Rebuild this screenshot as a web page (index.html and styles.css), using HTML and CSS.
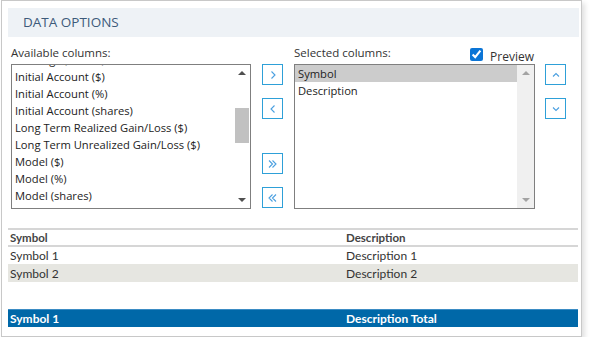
FILE: index.html
```html
<!DOCTYPE html>
<html lang="en">
<head>
    <meta charset="UTF-8">
    <title>Data Options</title>
    <link rel="stylesheet" href="styles.css">
</head>
<body>
    <div class="panel">
        <div class="panel-head">DATA OPTIONS</div>

        <div class="options">
            <div class="column available">
                <div class="column-label">Available columns:</div>
                <div class="listbox">
                    <ul class="items scrolled">
                        <li>Holdings (shares)</li>
                        <li>Initial Account ($)</li>
                        <li>Initial Account (%)</li>
                        <li>Initial Account (shares)</li>
                        <li>Long Term Realized Gain/Loss ($)</li>
                        <li>Long Term Unrealized Gain/Loss ($)</li>
                        <li>Model ($)</li>
                        <li>Model (%)</li>
                        <li>Model (shares)</li>
                    </ul>
                    <div class="scrollbar">
                        <span class="arrow up"></span>
                        <span class="track"><span class="thumb"></span></span>
                        <span class="arrow down"></span>
                    </div>
                </div>
            </div>

            <div class="move-buttons">
                <button class="icon-btn" title="Add">
                    <svg width="8" height="8" viewBox="0 0 8 8"><path d="M2.5 0.5 L6 4 L2.5 7.5"/></svg>
                </button>
                <button class="icon-btn" title="Remove">
                    <svg width="8" height="8" viewBox="0 0 8 8"><path d="M5.5 0.5 L2 4 L5.5 7.5"/></svg>
                </button>
                <button class="icon-btn gap" title="Add all">
                    <svg width="9" height="8" viewBox="0 0 9 8"><path d="M1 0.5 L4.5 4 L1 7.5 M4.5 0.5 L8 4 L4.5 7.5"/></svg>
                </button>
                <button class="icon-btn" title="Remove all">
                    <svg width="9" height="8" viewBox="0 0 9 8"><path d="M8 0.5 L4.5 4 L8 7.5 M4.5 0.5 L1 4 L4.5 7.5"/></svg>
                </button>
            </div>

            <div class="column selected">
                <div class="column-label">
                    <span>Selected columns:</span>
                    <label class="preview"><input type="checkbox" checked> Preview</label>
                </div>
                <div class="listbox">
                    <ul class="items">
                        <li class="active">Symbol</li>
                        <li>Description</li>
                    </ul>
                    <div class="scrollbar disabled">
                        <span class="arrow up"></span>
                        <span class="track"></span>
                        <span class="arrow down"></span>
                    </div>
                </div>
            </div>

            <div class="order-buttons">
                <button class="icon-btn" title="Move up">
                    <svg width="8" height="8" viewBox="0 0 8 8"><path d="M1 5.5 L4 2.5 L7 5.5"/></svg>
                </button>
                <button class="icon-btn" title="Move down">
                    <svg width="8" height="8" viewBox="0 0 8 8"><path d="M1 2.5 L4 5.5 L7 2.5"/></svg>
                </button>
            </div>
        </div>

        <table class="preview-table">
            <thead>
                <tr>
                    <th class="col-symbol">Symbol</th>
                    <th>Description</th>
                </tr>
            </thead>
            <tbody>
                <tr>
                    <td>Symbol 1</td>
                    <td>Description 1</td>
                </tr>
                <tr class="alt">
                    <td>Symbol 2</td>
                    <td>Description 2</td>
                </tr>
                <tr class="spacer"><td colspan="2"></td></tr>
            </tbody>
            <tfoot>
                <tr>
                    <td>Symbol 1</td>
                    <td>Description Total</td>
                </tr>
            </tfoot>
        </table>
    </div>
</body>
</html>
```

FILE: styles.css
```css
* {
    margin: 0;
    padding: 0;
    box-sizing: border-box;
}

body {
    background: #ffffff;
    font-family: "Open Sans", "Noto Sans", sans-serif;
    color: #222222;
}

.panel {
    width: 581px;
    height: 337px;
    margin-left: 1px;
    padding: 7px 2px 0 6px;
    border: 1px solid #c8c8c8;
    background: #ffffff;
    box-shadow: 3px 3px 5px rgba(0, 0, 0, 0.12);
}

.panel-head {
    height: 29px;
    padding-left: 15px;
    background: #eef2f6;
    color: #3d5a7a;
    font-size: 13.5px;
    line-height: 29px;
}

/* column pickers */
.options {
    display: flex;
    align-items: flex-start;
    padding: 8px 0 0 3px;
}

.column-label {
    display: flex;
    justify-content: space-between;
    height: 16px;
    margin-bottom: 3px;
    font-size: 11.5px;
    line-height: 16px;
    color: #333333;
}

.available {
    width: 240px;
}

.selected {
    width: 241px;
    margin-left: 11px;
}

.preview {
    display: flex;
    align-items: flex-start;
    gap: 7px;
    margin-top: 3px;
    padding-right: 1px;
    font-size: 12px;
    line-height: 17px;
}

.preview input {
    width: 13px;
    height: 13px;
    margin: 0;
    accent-color: #0b75d6;
}

.listbox {
    display: flex;
    height: 145px;
    border: 1px solid #7f7f7f;
    overflow: hidden;
}

.items {
    flex: 1;
    list-style: none;
    font-size: 11.2px;
    line-height: 17px;
}

.items li {
    height: 17px;
    padding-left: 3px;
    white-space: nowrap;
}

.items.scrolled {
    margin-top: -14px;
}

.items li.active {
    background: #cccccc;
}

.scrollbar {
    display: flex;
    flex-direction: column;
    width: 16px;
    background: #ffffff;
}

.scrollbar.disabled {
    width: 17px;
    background: #f0f0f0;
}

.arrow {
    display: flex;
    justify-content: center;
    align-items: center;
    height: 16px;
}

.arrow::before {
    content: "";
    border-left: 4px solid transparent;
    border-right: 4px solid transparent;
}

.arrow.up::before {
    border-bottom: 4px solid #505050;
}

.arrow.down::before {
    border-top: 4px solid #505050;
}

.disabled .arrow.up::before {
    border-bottom-color: #a3a3a3;
}

.disabled .arrow.down::before {
    border-top-color: #a3a3a3;
}

.track {
    flex: 1;
    padding: 27px 1px 0 1px;
}

.thumb {
    display: block;
    height: 35px;
    background: #c1c1c1;
}

/* arrow buttons */
.move-buttons,
.order-buttons {
    display: flex;
    flex-direction: column;
    padding-top: 19px;
}

.move-buttons {
    margin-left: 11px;
}

.order-buttons {
    margin-left: 10px;
}

.icon-btn {
    display: flex;
    justify-content: center;
    align-items: center;
    width: 21px;
    height: 21px;
    margin-bottom: 13px;
    border: 1px solid #2ea0d8;
    background: #ffffff;
    cursor: pointer;
}

.icon-btn:last-child {
    margin-bottom: 0;
}

.icon-btn.gap {
    margin-top: 21px;
}

.icon-btn svg path {
    fill: none;
    stroke: #4a9fe0;
    stroke-width: 1.1;
}

/* preview table */
.preview-table {
    width: 570px;
    margin-top: 19px;
    border-collapse: collapse;
    font-family: Lato, "Open Sans", sans-serif;
    font-size: 12px;
    color: #333333;
}

.preview-table th,
.preview-table td {
    height: 18px;
    padding: 0 2px;
    text-align: left;
    white-space: nowrap;
}

.preview-table th {
    height: 17px;
    border-top: 2px solid #d6d6d6;
    border-bottom: 2px solid #d6d6d6;
    font-size: 11.5px;
    font-weight: 700;
    color: #444444;
}

.preview-table .col-symbol {
    width: 336px;
}

.preview-table tr.alt td {
    background: #e6e6e1;
}

.preview-table tr.spacer td {
    height: 27px;
}

.preview-table tfoot td {
    height: 18px;
    border-top: 1px solid #3b8cc4;
    background: #0068a8;
    color: #ffffff;
    font-weight: 700;
}
```
